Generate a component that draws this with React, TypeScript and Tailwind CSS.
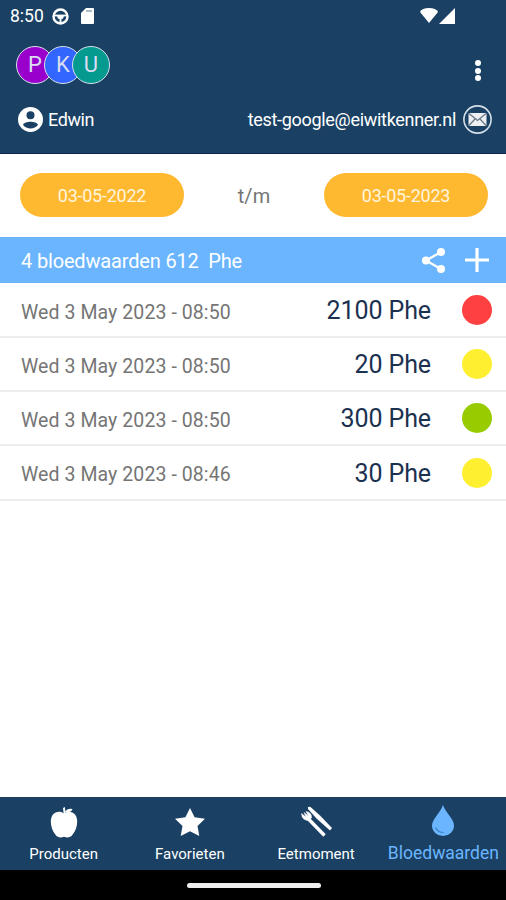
import type { ReactNode } from 'react';
import clsx from 'clsx';

interface BloodValue {
  id: number;
  date: string;
  value: string;
  /** Status colour class of the dot */
  dot: string;
}

const values: BloodValue[] = [
  { id: 1, date: 'Wed 3 May 2023 - 08:50', value: '2100 Phe', dot: 'bg-[#fe4040]' },
  { id: 2, date: 'Wed 3 May 2023 - 08:50', value: '20 Phe', dot: 'bg-[#fef030]' },
  { id: 3, date: 'Wed 3 May 2023 - 08:50', value: '300 Phe', dot: 'bg-[#99cc00]' },
  { id: 4, date: 'Wed 3 May 2023 - 08:46', value: '30 Phe', dot: 'bg-[#fef030]' },
];

const logo = [
  { letter: 'P', color: 'bg-[#9a00cc]' },
  { letter: 'K', color: 'bg-[#3366fe]' },
  { letter: 'U', color: 'bg-[#049a90]' },
];

function StatusBar() {
  return (
    <div className="flex h-8 items-center pl-[10px] pr-[51px]">
      <span className="w-[35px] text-[17.5px] leading-8">8:50</span>
      <svg className="ml-[7px] h-[17px] w-[17px]" viewBox="0 0 17 17" fill="none" stroke="currentColor">
        <circle cx="8.5" cy="8.5" r="7" strokeWidth="2.4" />
        <path d="M2 7.5h13" strokeWidth="1.8" />
        <path d="M5 7.5h7l-1 3.2H6z" fill="currentColor" stroke="none" />
        <path d="M8.5 10v5" strokeWidth="2" />
      </svg>
      <svg className="ml-3 h-4 w-[13px]" viewBox="0 0 13 16" fill="currentColor">
        <path d="M5 0h7a1 1 0 0 1 1 1v14a1 1 0 0 1-1 1H1a1 1 0 0 1-1-1V5z" />
        <path d="M5 3h6" stroke="#8fa4b5" strokeWidth="1.5" />
      </svg>
      <div className="ml-auto flex gap-[1px]">
        <svg className="h-4 w-[18px]" viewBox="0 0 18 16" fill="currentColor">
          <path d="M0 4Q2 0 9 0T18 4L9 15z" />
        </svg>
        <svg className="h-4 w-4" viewBox="0 0 16 16" fill="currentColor">
          <path d="M16 0v16H0z" />
        </svg>
      </div>
    </div>
  );
}

function Header() {
  return (
    <header className="h-[154px] shrink-0 border-b border-[#0c2452] bg-[#1a4163] text-white">
      <StatusBar />
      <div className="flex h-[68px] items-start justify-between pl-4 pr-[25px] pt-[14px]">
        <div className="flex">
          {logo.map(({ letter, color }, idx) => (
            <div
              key={letter}
              className={clsx(
                'flex size-[38px] items-center justify-center rounded-full border-[1.5px] border-[#d5e0ec] text-[22px] leading-none text-[#d9dcf2]',
                color,
                idx > 0 && '-ml-[10px]',
              )}
            >
              {letter}
            </div>
          ))}
        </div>
        <div className="mt-[14px] flex flex-col gap-[1.5px]">
          <span className="size-[6px] rounded-full bg-white" />
          <span className="size-[6px] rounded-full bg-white" />
          <span className="size-[6px] rounded-full bg-white" />
        </div>
      </div>
      <div className="flex h-[38px] items-center pl-[18px] pr-[14px]">
        <svg className="size-[25px]" viewBox="0 0 25 25">
          <circle cx="12.5" cy="12.5" r="12.5" fill="#fff" />
          <circle cx="12.5" cy="8.3" r="4" fill="#1a4163" />
          <path d="M5 17.8C6.5 13.8 18.5 13.8 20 17.8C16.5 22.8 8.5 22.8 5 17.8z" fill="#1a4163" />
        </svg>
        <span className="ml-[5px] text-[18px] tracking-[-0.4px]">Edwin</span>
        <span className="ml-auto whitespace-nowrap text-[18px] tracking-[-0.3px]">test-google@eiwitkenner.nl</span>
        <svg className="ml-[7px] size-[29px]" viewBox="0 0 29 29" fill="none">
          <circle cx="14.5" cy="14.5" r="13.6" stroke="#d5dfe9" strokeWidth="1.6" />
          <rect x="5.5" y="8" width="18" height="13" rx="1" fill="#eef0f3" />
          <path d="M6 8.5l8.5 7 8.5-7M6 20.5l6-6.500M23 20.5l-6-6.500" stroke="#667584" strokeWidth="1.2" />
        </svg>
      </div>
    </header>
  );
}

function DateButton({ children }: { children: ReactNode }) {
  return (
    <button className="h-11 w-[164px] rounded-[22px] bg-[#ffb931] text-[18px] tracking-[-0.25px] text-[#fff5df]">
      {children}
    </button>
  );
}

function ValueRow({ item }: { item: BloodValue }) {
  return (
    <li className="flex h-[54.3px] items-center border-b-2 border-[#ededed] pl-[21px] pr-[14px]">
      <span className="pt-[5px] text-[19.5px] tracking-[0.08px] text-[#757575]">{item.date}</span>
      <span className="ml-auto mr-[31px] pt-[2px] text-[25px] tracking-[-0.1px] text-[#1c3150]">{item.value}</span>
      <span className={clsx('size-[30px] rounded-full', item.dot)} />
    </li>
  );
}

function NavItem({ label, active, children }: { label: string; active?: boolean; children: ReactNode }) {
  return (
    <a className={clsx('flex flex-1 flex-col items-center', active ? 'pl-[2px] text-[#6bb5ff]' : 'pl-[1px] text-white')}>
      <span className="flex h-[47px] items-center justify-center">{children}</span>
      <span
        className={clsx(
          'whitespace-nowrap leading-5',
          active ? '-mt-px text-[17.5px]' : 'text-[15px]',
        )}
      >
        {label}
      </span>
    </a>
  );
}

function BottomNav() {
  return (
    <nav className="flex h-[73px] shrink-0 bg-[#1a4163]">
      <NavItem label="Producten">
        <svg className="mt-1 h-[31px] w-[28px]" viewBox="0 0 28 31" fill="currentColor">
          <path d="M14 6.500C11 4 6 4 3 7.500C-1 12.500 1 22 5 27C7.500 31 11 31 14 29.800C17 31 20.500 31 23 27C27 22 29 12.500 25 7.500C22 4 17 4 14 6.500z" />
          <path d="M13 1l1.800-1L16 7h-2.300z" />
          <path d="M15.5 5Q17 1 22.5 2Q21 6 15.5 5z" />
        </svg>
      </NavItem>
      <NavItem label="Favorieten">
        <svg className="mt-[3px] h-[28px] w-[30px]" viewBox="0 0 30 28" fill="currentColor">
          <path d="M15 0l4.600 9.300 10.400 1.500-7.500 7.200L24.300 28 15 23.300 5.700 28 7.500 18 0 10.800l10.400-1.500z" />
        </svg>
      </NavItem>
      <NavItem label="Eetmoment">
        <svg className="mt-0.5 h-[31px] w-[32px]" viewBox="0 0 32 31" fill="none" stroke="currentColor">
          {/* Knife */}
          <path d="M8 3Q7 0 10.5 1L20 9.5L32 22L30 24.500L16.500 12.500z" fill="currentColor" stroke="none" />
          {/* Fork */}
          <path d="M8.5 13L24.500 29.500" strokeWidth="3.4" />
          <path d="M1.500 7.500Q2 14.500 8.5 14.500L11.500 12Q12 6.500 6 5.500L8.5 10L4 6.500L6 11z" fill="currentColor" strokeWidth="0.5" />
        </svg>
      </NavItem>
      <NavItem label="Bloedwaarden" active>
        <svg className="h-[31px] w-[22px]" viewBox="0 0 22 31" fill="currentColor">
          <path d="M11 0C13 7 22 14 22 20.500A11 10.500 0 0 1 0 20.500C0 14 9 7 11 0z" />
          <path d="M3.500 22.500Q6 27.500 11.500 27.500" fill="none" stroke="#377fbf" strokeWidth="1.2" />
        </svg>
      </NavItem>
    </nav>
  );
}

export default function App() {
  return (
    <div className="flex h-[900px] w-[506px] flex-col overflow-hidden bg-white font-['Roboto',sans-serif]">
      <Header />

      {/* Period selection */}
      <section className="flex h-[83px] shrink-0 items-center justify-between pb-px pl-5 pr-[18px]">
        <DateButton>03-05-2022</DateButton>
        <span className="pt-[1px] text-[20px] tracking-[0.1px] text-[#757575]">t/m</span>
        <DateButton>03-05-2023</DateButton>
      </section>

      {/* Summary with actions */}
      <section className="flex h-[46px] shrink-0 items-center bg-[#6bb5ff] pl-[21px] pr-[17px] text-white">
        <span className="whitespace-pre pt-px text-[20px] tracking-[-0.16px]">{'4 bloedwaarden 612  Phe'}</span>
        <svg className="ml-auto h-[25px] w-[23px]" viewBox="0 0 23 25">
          <path d="M19 4L4 12.5L19 21" fill="none" stroke="currentColor" strokeWidth="2.3" />
          <g fill="currentColor">
            <circle cx="19" cy="4" r="4" />
            <circle cx="4" cy="12.5" r="4" />
            <circle cx="19" cy="21" r="4" />
          </g>
        </svg>
        <svg className="ml-[20px] size-6" viewBox="0 0 24 24" stroke="currentColor" strokeWidth="3.2">
          <path d="M12 0v24M0 12h24" />
        </svg>
      </section>

      <ul className="flex-1 pt-[0.5px]">
        {values.map((item) => (
          <ValueRow key={item.id} item={item} />
        ))}
      </ul>

      <BottomNav />
      <div className="flex h-[30px] shrink-0 items-center justify-center bg-black pl-[2px]">
        <div className="h-[5px] w-[134px] rounded-full bg-[#eeeeee]" />
      </div>
    </div>
  );
}
